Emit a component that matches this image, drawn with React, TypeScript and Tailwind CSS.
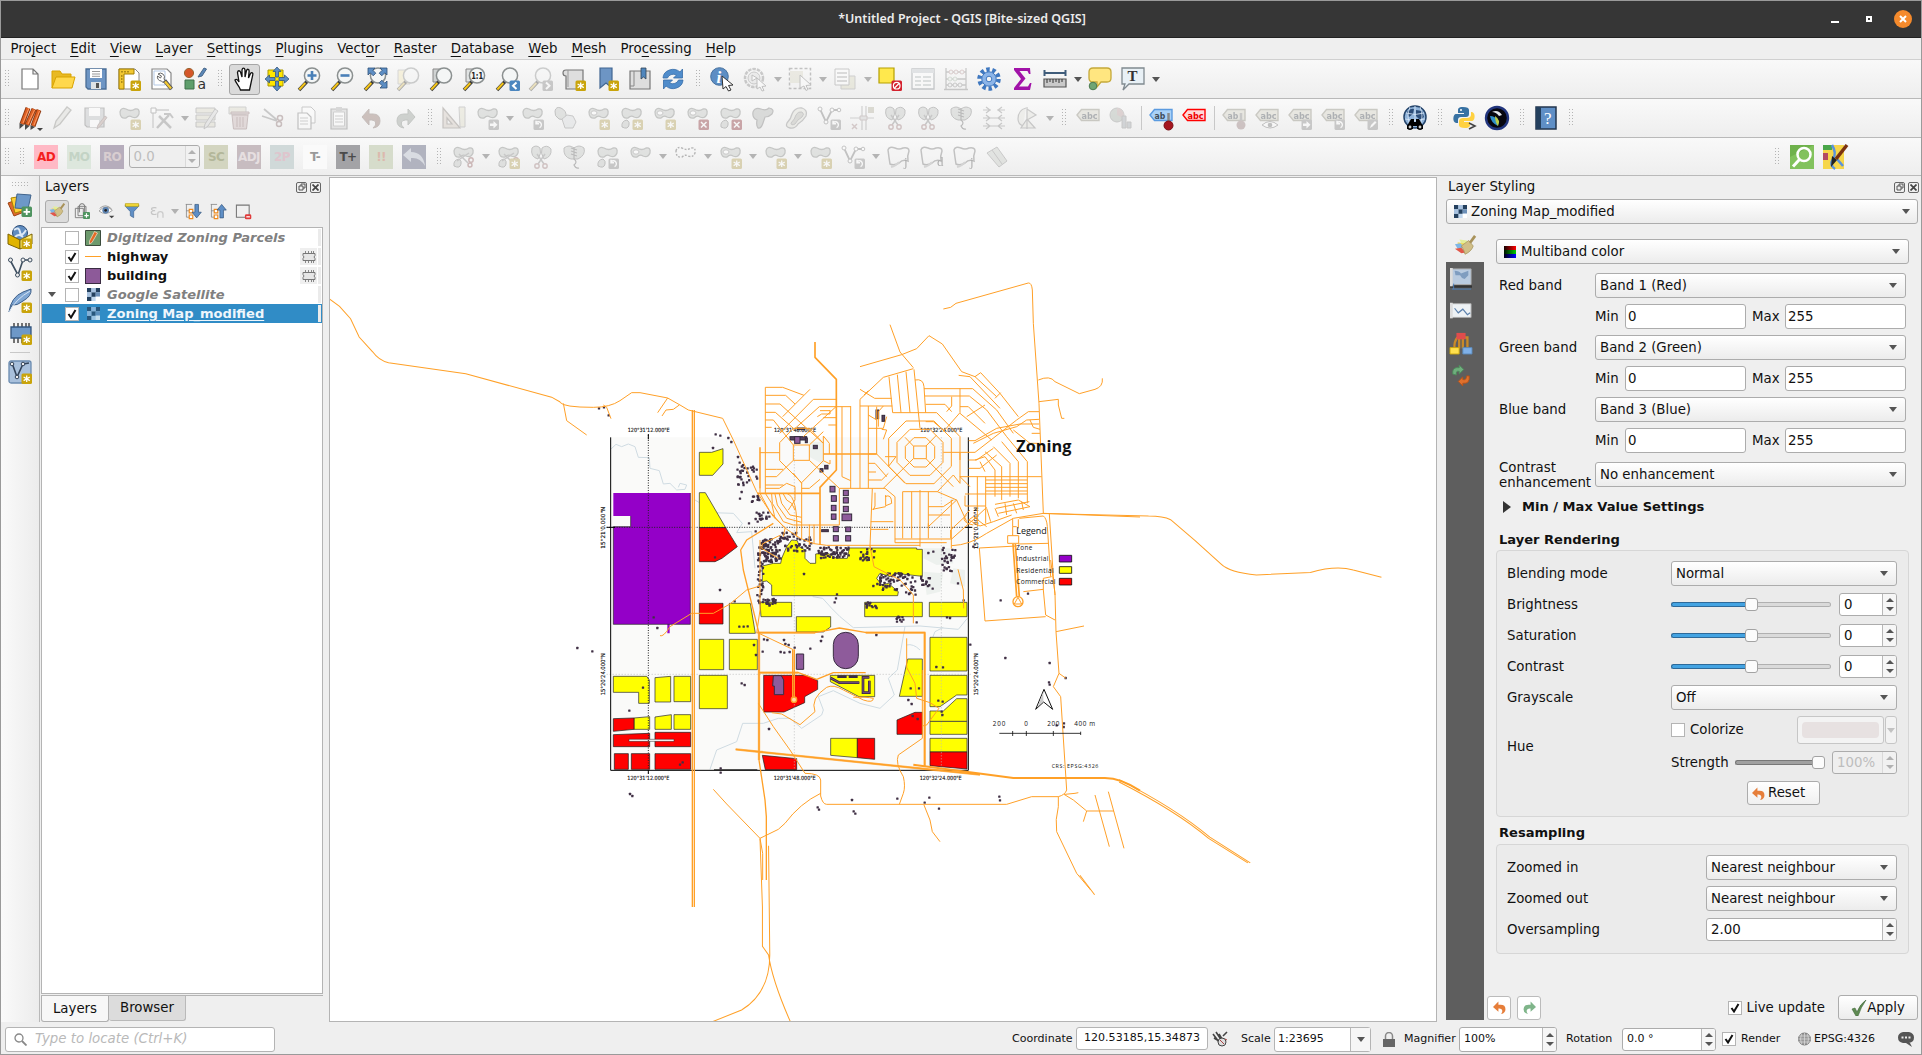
import React from "react";

/* ---------- icon drawing ---------- */

const BLOB = "M3 6 Q4 1 9 3 Q14 6 18 3 Q23 2 22 8 Q20 13 15 11 Q12 9 9 12 Q3 13 3 6Z";

function Badge({ k }: { k: string }) {
  const bg = k === "star" ? "#c9a40b" : k === "plus" ? "#4f9460" : k === "x" || k === "no" ? "#d3212d" : k === "prev" ? "#4b86bf" : "#8a8a8a";
  return (
    <g>
      <rect x="13.5" y="13.5" width="10.5" height="10.5" rx="1.5" fill={bg} />
      {k === "star" && <path d="M18.7 15.5v6.6M15.6 17l6.2 3.6M15.6 20.6l6.2-3.6" stroke="#fff" strokeWidth="1.3" />}
      {k === "plus" && <path d="M18.7 15.5v6.6M15.5 18.8h6.6" stroke="#fff" strokeWidth="1.8" />}
      {k === "x" && <path d="M16 16l5.5 5.5M21.500 16L16 21.500" stroke="#fff" strokeWidth="1.5" />}
      {k === "no" && <><circle cx="18.700" cy="18.700" r="3.300" fill="none" stroke="#fff" strokeWidth="1.200" /><path d="M16.500 21l4.500-4.500" stroke="#fff" strokeWidth="1.200" /></>}
      {k === "prev" && <path d="M20.500 15.500l-3.500 3.300 3.500 3.300" fill="none" stroke="#fff" strokeWidth="2" />}
      {k === "next" && <path d="M17 15.500l3.500 3.300-3.500 3.300" fill="none" stroke="#fff" strokeWidth="2" />}
      {k === "arrow" && <path d="M15 17.500h3.500v-2.500l4 3.800-4 3.800v-2.500H15z" fill="#fff" />}
      {k === "rot" && <path d="M16 17a3 3 0 1 1 3.500 4.600M16 14.800v3h3" fill="none" stroke="#fff" strokeWidth="1.400" />}
      {k === "pen" && <path d="M16 22l1-3 4-4 1.500 1.500-4 4z" fill="#fff" />}
    </g>
  );
}

function Mag({ x = 0, inner }: { x?: number; inner?: React.ReactNode }) {
  return (
    <g transform={`translate(${x} 0)`}>
      <path d="M1 23l8-8.500" stroke="#3d3d3d" strokeWidth="3.400" />
      <path d="M1.300 22.500l6-6.500" stroke="#f5c518" strokeWidth="2" />
      <circle cx="14" cy="8.500" r="7.600" fill="#f4f6f6" stroke="#8b9090" strokeWidth="1.500" />
      {inner}
    </g>
  );
}

const Tag = ({ fill, stroke, text }: { fill: string; stroke: string; text: string }) => (
  <g>
    <path d="M1 9l4.500-5.500H23v11H5.500z" fill={fill} stroke={stroke} strokeWidth="1.400" />
    <text x="5.500" y="12.500" fontSize="9" fontWeight="bold" fill={stroke === "#f00" ? "#e00" : "#3f4d5c"} textLength={text.length * 5.400} lengthAdjust="spacingAndGlyphs">{text}</text>
  </g>
);

function glyph(name: string): React.ReactNode {
  const [base, badge] = name.split("+");
  const b = badge ? <Badge k={badge} /> : null;
  const blob = <path d={BLOB} fill="#bfc6bf" stroke="#7d837d" strokeWidth="1.300" />;
  switch (base) {
    case "new":
      return <path d="M4 2h11l5 5v15H4zM15 2v5h5" fill="#fff" stroke="#777" strokeWidth="1.200" />;
    case "open":
      return <><path d="M1 21V4h8l2 3h9v3" fill="#e8b923" stroke="#d9a300" /><path d="M1 21l4-11h19l-3 11z" fill="#ffd84d" stroke="#d9a300" /></>;
    case "save":
      return <><path d="M2 2h20v20H4l-2-2z" fill="#6d95c4" stroke="#4a6d96" strokeWidth="1.300" /><path d="M6 2h12v9H6z" fill="#fff" /><path d="M8 4.500h8M8 7h8M8 9.300h8" stroke="#999" /><path d="M7 15h10v7H7z" fill="#dfe3e6" /><path d="M12 16h3v5h-3z" fill="#555" /></>;
    case "layout":
      return <><path d="M2 2h16l4 4v16H2z" fill="#fff" stroke="#888" /><path d="M2 2h15v5H7v15H2z" fill="#f2c832" stroke="#a37f00" /><path d="M5 4v1.500M8 4v1.500M11 4v1.500M4 9h1.500M4 12h1.500M4 15h1.500" stroke="#6b5200" />{b}</>;
    case "manager":
      return <><path d="M2 2h15l4 4v16H2z" fill="#fff" stroke="#888" strokeWidth="1.200" /><path d="M4 4h11v14H4z" fill="none" stroke="#b4c9e6" /><path d="M8 7a4 4 0 0 1 6 5l1.500 2-2 2-2-2a4 4 0 0 1-4-5l3 2 1-2z" fill="#fff" stroke="#666" /><path d="M14.500 13.500l7 8.500" stroke="#555" strokeWidth="4" /><path d="M15 14.500l6 7" stroke="#f4c931" strokeWidth="2.300" /></>;
    case "styles":
      return <><circle cx="6" cy="6" r="4.600" fill="#d4572a" stroke="#963" /><path d="M15 10l6-9 2.500 1L19 9z" fill="#5b88b8" stroke="#47678a" /><path d="M2 13h9v9H2z" fill="#5f9e6c" stroke="#3f704a" /><text x="14.500" y="22" fontSize="14" fill="#333">a</text></>;
    case "hand":
      return <path d="M8.500 23c-1-4-4.500-6.500-5.500-10 1.500-1.500 3 0 4 2L5.500 5.500C6 3 7.800 3.500 8.500 5l1.500 5V3c.5-2.500 2.500-2.500 3 0v7l1.500-6.500c.8-2 2.800-1.500 2.600.7L16.500 11l2-4.500c1.300-1.500 2.800-.7 2.300 1.200L19 16l-1.500 7z" fill="#fff" stroke="#111" strokeWidth="1.300" />;
    case "pan":
      return <><path d="M3 3h15v16H3z" fill="#ffe600" stroke="#a89600" /><path d="M12 0l4 4.500h-2.500V10h-3V4.500H8zM12 24l4-4.500h-2.500V14h-3v5.500H8zM0 12l4.500-4v2.500H10v3H4.500V16zM24 12l-4.500-4v2.500H14v3h5.500V16z" fill="#5d8ec4" stroke="#33557d" strokeWidth=".8" /></>;
    case "zin":
      return <Mag inner={<path d="M14 4v9M9.500 8.500h9" stroke="#4980b8" strokeWidth="2.600" />} />;
    case "zout":
      return <Mag inner={<path d="M9.500 8.500h9" stroke="#4980b8" strokeWidth="2.600" />} />;
    case "zfull":
      return <><Mag /><path d="M4 1h7L8.800 3.200l3 3-2.600 2.600-3-3L4 8zM23 1h-7l2.200 2.200-3 3 2.600 2.600 3-3L23 8zM23 21h-7l2.200-2.200-3-3 2.600-2.600 3 3L23 14z" fill="#5d8ec4" stroke="#2e5078" strokeWidth=".8" /></>;
    case "zsel":
      return <><path d="M1 3h12v14H1z" fill="#ffe98a" stroke="#aaa" /><Mag /></>;
    case "zlayer":
      return <><path d="M3 2h12v13H3z" fill="#d0d3d3" stroke="#888" /><Mag /></>;
    case "znative":
      return <><path d="M3 2h8v13H3z" fill="#e0e3e3" stroke="#888" /><Mag inner={<text x="8.200" y="12" fontSize="9.500" fontWeight="bold" textLength="12" lengthAdjust="spacingAndGlyphs" fill="#222">1:1</text>} /></>;
    case "zoom":
      return <><Mag />{b}</>;
    case "mapview":
      return <><path d="M4 3q-3 0-3 3t3 3v13h17V3z" fill="#dedede" stroke="#777" strokeWidth="1.200" /><path d="M6 3v17" stroke="#999" />{b}</>;
    case "bookmark":
      return <><path d="M5 1h12v20l-6-5-6 5z" fill="#6d95c4" stroke="#416692" strokeWidth="1.200" />{b}</>;
    case "bookmarks":
      return <><path d="M2 4h20v18H2z" fill="#dedede" stroke="#777" strokeWidth="1.200" /><path d="M6 4v15H2" fill="none" stroke="#888" /><path d="M13 1h5v11l-2.500-2L13 12z" fill="#4f86bd" stroke="#345" strokeWidth=".8" /></>;
    case "refresh":
      return <><path d="M2 11a10 9 0 0 1 17-6l2.500-3v9h-9l3-3a6 5 0 0 0-9 3z" fill="#4f8ccb" stroke="#356ca8" strokeWidth=".8" /><path d="M22 13a10 9 0 0 1-17 6l-2.500 3v-9h9l-3 3a6 5 0 0 0 9-3z" fill="#4f8ccb" stroke="#356ca8" strokeWidth=".8" /></>;
    case "identify":
      return <><circle cx="9.500" cy="9.500" r="8.800" fill="#5d8ec4" stroke="#45709f" /><text x="6.500" y="15.500" fontFamily="Liberation Serif" fontSize="17" fontStyle="italic" fontWeight="bold" fill="#fff">i</text><path d="M12 9l11 9-4.500.5L21 23l-2.500 1-2.500-4.500L13 22z" fill="#fff" stroke="#333" /></>;
    case "action":
      return <><circle cx="11" cy="11" r="9" fill="none" stroke="#8a8a8a" strokeWidth="2.500" strokeDasharray="3.500 1" /><circle cx="11" cy="11" r="6" fill="#ddd" stroke="#888" /><path d="M9 8l5 3-5 3zM14 11l9 8-4 .5 2 4-2 .5-2-4-3 2z" fill="#fff" stroke="#777" /></>;
    case "select":
      return <><path d="M1.500 1.500h21v20h-21z" fill="none" stroke="#777" strokeWidth="1.500" strokeDasharray="3 2" /><path d="M2 4h13v12H2z" fill="#dcd9b5" /><path d="M12 8l11 10-5 .5 2 4-2 1-2-4.500-4 2z" fill="#fff" stroke="#777" /></>;
    case "selform":
      return <><path d="M8 9h14v13H8z" fill="#dcd9a8" stroke="#999" /><path d="M2 2h14v16H2z" fill="#fff" stroke="#888" /><path d="M4 6h10M4 10h10M4 14h10" stroke="#999" strokeWidth="1.500" /></>;
    case "desel":
      return <><path d="M1 1h15v15H1z" fill="#ffe84d" stroke="#b5a000" strokeWidth="1.200" />{b}</>;
    case "table":
      return <><path d="M1 2h22v20H1z" fill="#fff" stroke="#7c8891" strokeWidth="1.300" /><path d="M1 2h22v4H1z" fill="#bdc9d2" /><path d="M4 10h6M12 10h8M4 14h6M12 14h8M4 18h6M12 18h8" stroke="#9aa" strokeWidth="1.300" /></>;
    case "abacus":
      return <><path d="M2 1v22M22 1v22M2 5h20M2 12h20M2 18h20M0 22.500h24" stroke="#888" strokeWidth="1.300" /><g fill="#eee" stroke="#c88"><circle cx="7" cy="5" r="2" /><circle cx="12" cy="5" r="2" /><circle cx="18" cy="5" r="2" /></g><g fill="#eee" stroke="#9b9"><circle cx="6" cy="12" r="2" /><circle cx="11" cy="12" r="2" /></g><g fill="#eee" stroke="#888"><circle cx="6" cy="18" r="2" /><circle cx="11" cy="18" r="2" /><circle cx="16" cy="18" r="2" /></g></>;
    case "gear":
      return <><circle cx="12" cy="12" r="9.500" fill="none" stroke="#3f78c0" strokeWidth="4.500" strokeDasharray="3.400 2.570" /><circle cx="12" cy="12" r="7.200" fill="#8bb4e8" stroke="#3f78c0" /><circle cx="12" cy="12" r="2.800" fill="#f5f5f5" stroke="#3f78c0" /></>;
    case "sum":
      return <path d="M4 1h16l.5 6H19l-1.500-3H9.500l6 7.500L9 19.500h9l2-3.500h1.500L20 23H4v-2l7-9-7-9z" fill="#a112a8" />;
    case "ruler":
      return <><path d="M1 6h22M1.500 3v6M22.500 3v6" stroke="#3f5c7a" strokeWidth="2" /><path d="M1 12h22v8H1z" fill="#c9c9c9" stroke="#555" strokeWidth="1.200" /><path d="M4 12v4M7 12v3M10 12v4M13 12v3M16 12v4M19 12v3" stroke="#333" /></>;
    case "tip":
      return <><path d="M5 1h14q4 0 4 4v6q0 4-4 4h-6l-4 5v-5H5q-4 0-4-4V5q0-4 4-4z" fill="#ffe680" stroke="#c5a93a" strokeWidth="1.300" /><circle cx="5" cy="19" r="3.800" fill="#6fa574" stroke="#4c7a50" /></>;
    case "annot":
      return <><path d="M1 1h22v16H8l-6 6 2-6H1z" fill="#e9f1f6" stroke="#808a90" strokeWidth="1.300" /><text x="6.500" y="14" fontFamily="Liberation Serif" fontSize="15" fontWeight="bold" fill="#333">T</text></>;
    case "pencils":
      return <><path d="M4 18L10 2M9 19L16 3M15 20L21 4" stroke="#8f3a12" strokeWidth="5" /><path d="M4 18L10 2M9 19L16 3M15 20L21 4" stroke="#dd5f22" strokeWidth="3.200" /><path d="M5 17l6-15M10 18l6.500-14M16 19l5.500-14" stroke="#ff9a63" strokeWidth="1" /><path d="M1.500 17l4.500 2-4.500 4zM7 18l4.500 2-4.500 4zM12.500 19l4.500 2-4.500 3z" fill="#4a4a4a" /><path d="M19 22h6l-3 3z" fill="#444" /></>;
    case "pencil":
      return <path d="M3 22l2-7L16 1l4 3L9 18z" fill="#d9d9d0" stroke="#8a8a80" strokeWidth="1.300" />;
    case "saveedit":
      return <><path d="M1 2h19v19H3l-2-2z" fill="#b9c0c6" stroke="#777" strokeWidth="1.200" /><path d="M5 2h11v8H5zM6 14h9v7H6z" fill="#fff" /><path d="M13 23l1-4 7-9 2 1.500-7 9z" fill="#c98" stroke="#977" /></>;
    case "vertex":
      return <><path d="M3 4h16M3 4v18" stroke="#999" strokeWidth="1.300" /><path d="M1 2h5v5H1z" fill="#fff" stroke="#777" /><path d="M7 22l12-13M9 10l12 12" stroke="#888" strokeWidth="2.500" /><path d="M14 8h6l3 4" stroke="#888" fill="none" strokeWidth="2" /></>;
    case "attr":
      return <><path d="M1 2h19v5H1zM1 9h19v5H1zM1 16h19v5H1z" fill="#dcd9b5" stroke="#888" /><path d="M9 23l1-5L20 3l3 2-10 15z" fill="#d5d5d5" stroke="#888" /></>;
    case "trash":
      return <><path d="M1 1h17v7H1z" fill="#dcd9b5" stroke="#999" /><path d="M4 9h16l-1.500 14h-13zM3 6h18v2H3z" fill="#d8b0b0" stroke="#a06b6b" /><path d="M9 11v10M12 11v10M15 11v10" stroke="#a06b6b" /></>;
    case "cut":
      return <><path d="M1 10l15 5M3 3l13 11" stroke="#888" strokeWidth="1.800" /><circle cx="19" cy="12" r="2.500" fill="none" stroke="#a06b6b" strokeWidth="1.500" /><circle cx="18" cy="18" r="2.500" fill="none" stroke="#a06b6b" strokeWidth="1.500" /></>;
    case "copy":
      return <><path d="M8 1h9l4 4v12H8z" fill="#fff" stroke="#888" /><path d="M4 7h9l4 4v12H4z" fill="#fff" stroke="#777" strokeWidth="1.200" /><path d="M6 12h8M6 15h8M6 18h8" stroke="#999" /></>;
    case "paste":
      return <><path d="M4 3h16v20H4z" fill="#ccc" stroke="#777" strokeWidth="1.200" /><path d="M6.500 6h11v14h-11z" fill="#fff" stroke="#999" /><path d="M9 1h6v4H9z" fill="#aaa" /><path d="M8 10h8M8 13h8M8 16h8" stroke="#999" /></>;
    case "undo":
      return <path d="M9 3v5h4q7 0 7 7 0 6-7 7 4-3 2.500-6-1-2-4-2H9v5L2 11z" fill="#a86e5c" stroke="#8d6a5c" />;
    case "redo":
      return <path d="M15 3v5h-4q-7 0-7 7 0 6 7 7-4-3-2.500-6 1-2 4-2H15v5l7-8z" fill="#93a093" stroke="#788578" />;
    case "ruler2":
      return <><path d="M1 2l17 20H1zM5 12v6h5z" fill="#dcc6b5" stroke="#8a7c70" strokeWidth="1.200" fillRule="evenodd" /><path d="M17 1h6v20h-5z" fill="#e3dfb5" stroke="#999" /></>;
    case "blob":
      return <>{blob}{b}</>;
    case "ring":
      return <>{blob}<ellipse cx="8" cy="7" rx="3" ry="2.200" fill="#fff" stroke="#888" />{b}</>;
    case "part":
      return <>{blob}<path d="M3 21q-1-6 5-7 3 2 2 5-1 5-7 2z" fill="#bfc6bf" stroke="#777" />{b}</>;
    case "hex":
      return <><path d="M2 5q1-5 6-3 6 3 5 9-3 4-7 2-5-3-4-8z" fill="#bfc6bf" stroke="#777" /><path d="M9 13l5-4 6 1 3 6-3 6H12z" fill="#d5dbe0" stroke="#888" /></>;
    case "reshape":
      return <path d="M2 6q2-5 8-3 5 2 8-1 6 1 3 6-3 3-7 3l-2 6q-2 6-5 5-2-2-1-8-5-2-4-8z" fill="#aeb5ae" stroke="#777" strokeWidth="1.200" />;
    case "offset":
      return <><path d="M3 17q4-4 5-9 3-7 10-6 6 2 4 8-3 5-8 8-3 5-8 4-5-1-3-5z" fill="#dfe0d0" stroke="#888" strokeWidth="1.300" /><path d="M7 17q4-4 5-8 2-4 6-3 3 2 0 5-5 3-7 7-4 2-4-1z" fill="#b5b5a8" stroke="#888" /></>;
    case "vsplit":
      return <><path d="M3 3l6 13L15 4h7" fill="none" stroke="#777" strokeWidth="1.800" /><g fill="#fff" stroke="#777"><circle cx="3" cy="3" r="2" /><circle cx="15" cy="4" r="2" /><circle cx="22" cy="4" r="1.800" /><circle cx="9" cy="16" r="2" /></g>{b}</>;
    case "node":
      return <><path d="M12 0v24M16 0v24M0 12h24" stroke="#999" strokeWidth="1.200" /><path d="M10 10h7v4h-7z" fill="#ccc" stroke="#a88" /><path d="M2 18l5 5M7 18l-5 5" stroke="#b88" strokeWidth="1.500" /><path d="M18 1h6v6h-6z" fill="#b5b08a" /></>;
    case "scissor":
      return <><path d="M3 3q4-4 8 0 2 5-2 11Q1 12 3 3zM13 3q5-4 9 1 1 8-7 10-4-6-2-11z" fill="#bfc6bf" stroke="#777" /><path d="M8 9l7 10M16 9L9 19" stroke="#888" strokeWidth="1.500" /><circle cx="8" cy="21" r="2.200" fill="none" stroke="#b77" strokeWidth="1.400" /><circle cx="16" cy="21" r="2.200" fill="none" stroke="#b77" strokeWidth="1.400" /></>;
    case "cutpart":
      return <>{blob}<path d="M3 21q-1-6 5-7 3 2 2 5-1 5-7 2z" fill="#bfc6bf" stroke="#777" /><path d="M6 16l12-8M8 9l9 9" stroke="#888" strokeWidth="1.500" /><circle cx="20" cy="15" r="2.200" fill="none" stroke="#b55" strokeWidth="1.400" /><circle cx="19" cy="20" r="2" fill="none" stroke="#b55" strokeWidth="1.400" />{b}</>;
    case "lace":
      return <><path d="M2 3q5-4 10 0 5-4 10 0 2 7-6 11h-7Q1 12 2 3z" fill="#bfc6bf" stroke="#777" /><path d="M9 3l6 2M9 6l6 2M9 9l6 2M12 2v12q4 3 0 6 2 4 5 3" fill="none" stroke="#666" strokeWidth="1.200" /></>;
    case "rows":
      return <path d="M1 4h8M15 4h8M1 12h22M1 20h22M4 1l4 3-4 3M20 1l-4 3 4 3M4 9l4 3-4 3M20 9l-4 3 4 3M4 17l4 3-4 3M20 17l-4 3 4 3" fill="none" stroke="#888" strokeWidth="1.200" />;
    case "rotate":
      return <path d="M11 2q-8 2-8 11 0 5 5 7M12 1v22M12 3l9 6-9 5zM12 13l8 9H6z" fill="#e3e3d8" stroke="#888" strokeWidth="1.200" />;
    case "tag":
      return <Tag fill="#d5d2b5" stroke="#8d8a6c" text="abc" />;
    case "tagdot":
      return <><Tag fill="#d5d2b5" stroke="#8d8a6c" text="ab" /><path d="M19 7v8" stroke="#888" strokeWidth="2.500" /><circle cx="19" cy="19" r="4.500" fill="#a77" /></>;
    case "tageye":
      return <><Tag fill="#d5d2b5" stroke="#8d8a6c" text="abc" /><path d="M7 19q8-7 16 0-8 6-16 0z" fill="#fff" stroke="#777" /><circle cx="15" cy="19" r="2.300" fill="#777" /></>;
    case "tagb":
      return <><Tag fill="#d5d2b5" stroke="#8d8a6c" text="abc" />{b}</>;
    case "tagblue":
      return <><Tag fill="#a9d1f7" stroke="#5b9be0" text="ab" /><path d="M19.500 7v9" stroke="#888" strokeWidth="2.500" /><circle cx="19.500" cy="19.500" r="4.500" fill="#a5161f" stroke="#7a0f16" /></>;
    case "tagred":
      return <Tag fill="#ffd9d9" stroke="#f00" text="abc" />;
    case "chart":
      return <><circle cx="8" cy="9" r="7" fill="#a3b4a3" stroke="#888" /><path d="M8 9V2a7 7 0 0 1 6 10z" fill="#c99" /><path d="M13 10h4v12h-4zM18 16h4v6h-4z" fill="#9aa8b5" stroke="#888" /></>;
    case "globebin":
      return <><circle cx="12" cy="11" r="11" fill="#8fb3da" stroke="#24446b" strokeWidth="1.500" /><path d="M4 6q3-4 7-3l-1 5-4 3zM13 4l6 1 2 6-4 3-4-4z" fill="#2c4d78" /><path d="M3 7q9 3 18 0M2 13q10 3 20 0M12 0v20M7 1q-4 9 0 18M17 1q4 9 0 18" fill="none" stroke="#dbe9f8" strokeWidth=".8" /><path d="M8 13h3v3h2v-3h3l4 7v3h-6v-3h-4v3H4v-3z" fill="#000" /><circle cx="7" cy="21" r="2.200" fill="#ccc" stroke="#000" strokeWidth="1.500" /><circle cx="17" cy="21" r="2.200" fill="#ccc" stroke="#000" strokeWidth="1.500" /></>;
    case "python":
      return <><path d="M11 1C6 1 6 3 6 5v2h6v1H4c-3 0-4 8 0 9h2v-3c0-2 1-3 3-3h5c2 0 3-1 3-3V4c0-2-2-3-6-3z" fill="#3872a3" /><path d="M13 22c5 0 5-2 5-4v-2h-6v-1h8c3 0 4-8 0-9h-1v3c0 2-2 3-4 3h-4c-2 0-4 1-4 3v4c0 2 2 3 6 3z" fill="#ffd140" /><circle cx="9" cy="4" r="1" fill="#fff" /><path d="M17 17l6 3-6 3" fill="none" stroke="#444" strokeWidth="1.600" /></>;
    case "parrot":
      return <><circle cx="12" cy="12" r="11" fill="#07070f" stroke="#22357d" strokeWidth="2.400" /><path d="M7 6q6-3 10 3l-3 1q-3-4-7-4z" fill="#e3e7ec" /><path d="M5 10q5 0 7 4l1 6q-7-3-8-10z" fill="#2f8fc9" /><path d="M10 10q6 4 3 10-3-4-3-10z" fill="#b9cf4a" /></>;
    case "help":
      return <><path d="M2 1h20v22H2z" fill="#5f8fc6" stroke="#23364d" strokeWidth="1.500" /><path d="M2 1h5v22H2z" fill="#24405e" /><text x="10" y="17.500" fontFamily="Liberation Serif" fontSize="17" fill="#fff">?</text></>;
    case "poly":
      return <><path d="M2 5q1-4 7-2 4 2 8 0 6-1 6 3-2 5-1 10-5-2-9 2-5 3-9 1-1-6-2-14z" fill="#f4f4f4" stroke="#777" strokeWidth="1.500" /><path d="M5 22q5-1 8-5" fill="none" stroke="#aaa" strokeWidth="2" /><text x="18" y="21" fontFamily="Liberation Serif" fontSize="13" fill="#444">{badge}</text></>;
    case "dash":
      return <path d={BLOB} fill="none" stroke="#555" strokeWidth="1.400" strokeDasharray="2 1.500" />;
    case "eraser":
      return <path d="M2 8l10-6 10 14-8 6zM7 5l10 14" fill="#c5ccc0" stroke="#888" />;
    case "osm":
      return <><path d="M0 0h24v24H0z" fill="#6fb24c" /><path d="M0 12L24 0v24H0z" fill="#82c25d" /><circle cx="14" cy="9.500" r="6.500" fill="none" stroke="#fff" strokeWidth="2.500" /><path d="M9.500 14.500L3 21.500" stroke="#fff" strokeWidth="3" /></>;
    case "mapart":
      return <><path d="M0 0h21v24H0z" fill="#f6d64b" /><path d="M0 0h9v5H0z" fill="#4aa64a" /><path d="M0 8h5v7H0z" fill="#b34a62" /><path d="M9 0q5 8 1 14-4 6 2 10M14 14l6 7" stroke="#5a92dd" strokeWidth="2.500" fill="none" /><path d="M24 0L13 14" stroke="#7b3210" strokeWidth="3.500" /><path d="M9 11l5 4-6 7z" fill="#222" /></>;
    case "lstack":
      return <><path d="M0 10l11-4 5 13-10 4z" fill="#e0692c" stroke="#9c4312" /><path d="M3 5l12-2 3 14-11 3z" fill="#ffd035" stroke="#a88300" /><path d="M9 1l14 1-3 14-13-1z" fill="#6d98c8" stroke="#41648c" />{b}</>;
    case "gpkg":
      return <><circle cx="12" cy="8" r="7.500" fill="#5f8cc0" stroke="#2f4f78" /><path d="M6 5q5-4 6 2t6-2M7 12q4-4 8 0" stroke="#dce8f5" fill="none" strokeWidth="2" /><path d="M0 9l12 6v9L0 19z" fill="#e0b400" stroke="#7d6300" /><path d="M24 9l-12 6v9l12-5z" fill="#fff07a" stroke="#7d6300" />{b}</>;
    case "vnew":
      return <><path d="M2 3l8 15L15 3h7" fill="none" stroke="#3e4f60" strokeWidth="1.600" /><g fill="#eee" stroke="#3e4f60"><circle cx="2.500" cy="3" r="2" /><circle cx="15" cy="3" r="2" /><circle cx="22" cy="3" r="2" /><circle cx="9.500" cy="18" r="2" /></g>{b}</>;
    case "feather":
      return <><path d="M1 23Q3 8 15 3l8-3q1 7-8 12-6 5-11 4z" fill="#7fa6d3" stroke="#3d5f89" /><path d="M1 23Q8 10 22 2" fill="none" stroke="#d6e4f3" />{b}</>;
    case "chip":
      return <><path d="M6 2v20M10 2v20M14 2v20M18 2v20M21 2v20" stroke="#3d3d3d" strokeWidth="1.400" /><path d="M3 6h20v11H3z" fill="#6d98c8" stroke="#33557d" strokeWidth="1.300" />{b}</>;
    case "vbox":
      return <><rect x="1" y="1" width="22" height="22" rx="2" fill="#a8c0dc" stroke="#6a8bb0" strokeWidth="1.300" /><path d="M4 3l5 14L15 4l6-1" fill="none" stroke="#33445a" strokeWidth="1.600" /><g fill="#eee" stroke="#33445a"><circle cx="4" cy="4" r="1.800" /><circle cx="9" cy="17" r="1.800" /><circle cx="15" cy="4" r="1.800" /></g>{b}</>;
    case "brush":
      return <><path d="M6 5l8 1 3 5-7 2z" fill="#e3ee9a" /><path d="M4 8l7 1 1 5-8-1z" fill="#f0dc5e" /><path d="M1 10l6-1 5 5-8 1z" fill="#7fb6e6" /><path d="M1 15l7-1 5 5-5 1z" fill="#e2574a" /><path d="M8 12l8-6 5 6q-2 6-9 9-1-5-4-9z" fill="#d1bf88" stroke="#a3935a" strokeWidth=".8" /><path d="M17.500 8.500L23 1" stroke="#a8925a" strokeWidth="3" /></>;
    case "addgrp":
      return <><path d="M2 8h12v14H2zM6 5h12v14H6z" fill="#eee" stroke="#777" strokeWidth="1.300" /><path d="M8 14V5a4 4 0 0 1 8 0v9" fill="none" stroke="#777" strokeWidth="1.500" />{b}</>;
    case "eye":
      return <><path d="M0 12Q10 1 20 11 10 20 0 12z" fill="#fff" stroke="#999" strokeWidth="1.300" /><circle cx="10" cy="11" r="5" fill="#5d83b0" /><circle cx="10" cy="11" r="2" fill="#222" /><path d="M1 8q9-8 18 1" fill="none" stroke="#777" /><path d="M15 19h8l-4 4z" fill="#444" /></>;
    case "filter":
      return <><path d="M2 3h20v2l-7.500 8v9l-5-3v-6L2 5z" fill="#5f8fc6" stroke="#3c638f" /><path d="M2 1h20v4H2z" fill="#f5dc3d" stroke="#b59b00" /></>;
    case "eps":
      return <><text x="1" y="18" fontSize="22" fill="#888">ε</text><path d="M13 22v-5a4 4 0 0 1 8 0v5" fill="none" stroke="#999" strokeWidth="2" /></>;
    case "expand":
    case "collapse":
      return <><path d="M1 2h9M2 2v18h6M2 11h6" fill="none" stroke="#777" /><path d="M6 9h5v5H6zM6 17h5v5H6z" fill="#fff" stroke="#f08a1c" strokeWidth="1.600" />{base === "expand" ? <path d="M14 2h5v11h4l-6.500 8L10 13h4z" fill="#5f8fc6" stroke="#33557d" /> : <path d="M14 21h5V10h4l-6.500-8L10 10h4z" fill="#5f8fc6" stroke="#33557d" />}</>;
    case "removel":
      return <><path d="M2 3h18v17H2z" fill="#f0f0f0" stroke="#777" strokeWidth="1.500" /><rect x="14" y="16" width="9" height="7" rx="2" fill="#e03c3c" /><path d="M16 19.500h5" stroke="#fff" strokeWidth="1.800" /></>;
    case "checker":
      return <><path d="M0 0h24v24H0z" fill="#c3d8ee" /><path d="M0 0h8v8H0zM16 0h8v8h-8zM8 8h8v8H8zM0 16h8v8H0z" fill="#24405e" /><path d="M8 0h8v8H8zM0 8h8v8H0z" fill="#a8c2e0" /><path d="M16 8h8v8h-8z" fill="#6d90b8" /><path d="M16 16h8v8h-8z" fill="#fff" /></>;
    case "transp":
      return <><path d="M2 1h21v17H2z" fill="#b9cbe0" stroke="#aaa" /><path d="M5 3q5 0 7 3l8-3v5l-4 4q-4-1-5-4L6 8z" fill="#7f9dc0" /><path d="M0 19h24v2.500H0z" fill="#333" /><path d="M2 23h21M4 17v6" stroke="#4a80c0" /><path d="M0 0h3v20H0z" fill="#ddd" /></>;
    case "hist":
      return <><path d="M1 4h22v15H1z" fill="#eef2f5" stroke="#aaa" /><path d="M0 3h3v17H0z" fill="#ddd" /><path d="M5 9l4 5 5-4 5 6 3-2" fill="none" stroke="#5b80ac" strokeWidth="1.300" /></>;
    case "sources":
      return <><path d="M8 6q-4 5-3 12M15 6h4v12M10 6v12M14 6v12" stroke="#c98a28" strokeWidth="2.500" fill="none" /><path d="M7 1h10v7H7z" fill="#e04c4c" /><path d="M0 17h10v7H0z" fill="#ffe04d" stroke="#c9a40b" /><path d="M14 17h10v7H14z" fill="#7fb0e8" stroke="#5b88b8" /></>;
    case "history":
      return <><path d="M3 11Q2 3 10 4V1l5 5-5 5V8q-4-1-3 4z" fill="#6faf7d" stroke="#4d8a5b" /><path d="M21 13q1 9-7 8v3l-5-5 5-5v3q4 1 4-4z" fill="#e0702c" stroke="#b3521a" /></>;
    default:
      return null;
  }
}

const Icon = ({ n, s = 24, dim }: { n: string; s?: number; dim?: boolean }) => (
  <svg width={s} height={s} viewBox="0 0 24 24" className={dim ? "shrink-0 overflow-visible opacity-40 saturate-50" : "shrink-0 overflow-visible"}>{glyph(n)}</svg>
);

/* ---------- toolbar pieces ---------- */

const Grip = ({ first }: { first?: boolean }) => (
  <div className={first ? "flex w-[12.500px] shrink-0 justify-center" : "flex w-4 shrink-0 justify-center"}>
    <svg width="4" height="18"><path d="M.5 0v18M3.500 0v18" stroke="#b4b4b4" strokeDasharray="1 2" /></svg>
  </div>
);

const Arrow = ({ dim }: { dim?: boolean }) => (
  <div className="flex w-3 shrink-0 justify-center">
    <svg width="8" height="5" className={dim ? "opacity-40" : ""}><path d="M0 0h8L4 5z" fill="#555" /></svg>
  </div>
);

function Bar({ items }: { items: string[] }) {
  return (
    <>
      {items.map((raw, i) => {
        if (raw === "|") return <Grip key={i} />;
        if (raw === "|0") return <Grip key={i} first />;
        if (raw === "/") return <div key={i} className="mx-[3px] h-6 w-px shrink-0 bg-[#c8c8c8]" />;
        if (raw === "v") return <Arrow key={i} />;
        if (raw === "-v") return <Arrow key={i} dim />;
        const dim = raw.startsWith("-");
        const n = dim ? raw.slice(1) : raw;
        if (n === "hand")
          return (
            <div key={i} className="mx-px flex h-[31px] w-[31px] shrink-0 items-center justify-center rounded-[3px] border border-[#a6a6a6] bg-[#dadada]">
              <Icon n={n} />
            </div>
          );
        return <div key={i} className="flex w-[33px] shrink-0 justify-center"><Icon n={n} dim={dim} /></div>;
      })}
    </>
  );
}

const row1 = ["|0", "new", "open", "save", "layout+star", "manager", "styles", "|", "hand", "pan", "zin", "zout", "zfull", "-zsel", "zlayer", "znative", "zoom+prev", "-zoom+next", "mapview+star", "bookmark+star", "bookmarks", "refresh", "|", "identify", "-action", "-v", "-select", "-v", "-selform", "-v", "desel+no", "-table", "-abacus", "gear", "sum", "ruler", "v", "tip", "annot", "v"];
const row2 = ["|0", "pencils", "-pencil", "-saveedit", "-blob+star", "-vertex", "-v", "-attr", "-trash", "-cut", "-copy", "-paste", "-undo", "-redo", "|", "-ruler2", "-blob+arrow", "-v", "-blob+rot", "-hex", "-ring+star", "-part+star", "-ring+star", "-ring+x", "-part+x", "-reshape", "-offset", "-vsplit+rot", "-node", "-scissor", "-scissor", "-lace", "-rows", "-rotate", "-v", "|", "-tag", "-chart", "/", "tagblue", "tagred", "/", "-tagdot", "-tageye", "-tagb+arrow", "-tagb+rot", "-tagb+pen", "|", "globebin", "|", "python", "parrot", "|", "help", "|"];
const row3 = ["|", "-cutpart", "-v", "-cutpart+star", "-scissor", "-lace", "-part+rot", "-ring", "-v", "-dash", "-v", "-ring+star", "-v", "-blob+star", "-v", "-blob+star", "-vsplit+rot", "-v", "-poly+j", "-poly+d", "-poly+j", "-eraser"];

const Chip = ({ t, c }: { t: string; c: string }) => (
  <div className="flex w-[33px] shrink-0 justify-center"><div className={`flex h-6 w-6 items-center justify-center text-[12px] font-bold tracking-tighter ${c}`}>{t}</div></div>
);

/* ---------- form controls ---------- */

const Down = ({ dim }: { dim?: boolean }) => (
  <svg width="8" height="5" className={dim ? "shrink-0 opacity-30" : "shrink-0"}><path d="M0 0h8L4 5z" fill="#555" /></svg>
);

const Combo = ({ text, cls, icon, pr = "pr-2" }: { text: string; cls: string; icon?: React.ReactNode; pr?: string }) => (
  <div className={`flex h-[25px] shrink-0 items-center rounded-[3px] border border-[#acacac] bg-gradient-to-b from-white to-[#ececec] ${icon ? "pl-[7px]" : "pl-1"} ${pr} ${cls}`}>
    {icon}<span className="flex-1">{text}</span><Down />
  </div>
);

const Field = ({ text, cls }: { text: string; cls: string }) => (
  <div className={`flex h-[25px] shrink-0 items-center rounded-[3px] border border-[#acacac] bg-white pl-0.5 ${cls}`}>{text}</div>
);

const Spin = ({ text, cls, dim }: { text: string; cls: string; dim?: boolean }) => (
  <div className={`flex shrink-0 items-stretch overflow-hidden rounded-[3px] border border-[#acacac] ${dim ? "bg-[#efefef] text-[#bdbdbd]" : "bg-white"} ${cls}`}>
    <span className="flex flex-1 items-center pl-1">{text}</span>
    <span className={`flex w-3.5 flex-col items-center justify-center gap-[5px] border-l border-[#b8b8b8] bg-[#f6f6f6] ${dim ? "opacity-40" : ""}`}>
      <svg width="8" height="4"><path d="M0 4h8L4 0z" fill="#555" /></svg>
      <svg width="8" height="4"><path d="M0 0h8L4 4z" fill="#555" /></svg>
    </span>
  </div>
);

const Check = ({ on }: { on?: boolean }) => (
  <div className="flex h-3.5 w-3.5 shrink-0 items-center justify-center border border-[#b4b4b4] bg-white">
    {on && <svg width="10" height="10" viewBox="0 0 10 10"><path d="M1.500 5l2.500 3.500L8.500 1" fill="none" stroke="#111" strokeWidth="2" /></svg>}
  </div>
);

const WinBtns = () => (
  <div className="flex gap-[3px]">
    <div className="flex h-[11px] w-[11px] items-center justify-center rounded-[2px] border border-[#666]">
      <svg width="8" height="8" viewBox="0 0 8 8" fill="none" stroke="#555"><path d="M1 3h4v4H1zM3 3V1h4v4H5" /></svg>
    </div>
    <div className="flex h-[11px] w-[11px] items-center justify-center rounded-[2px] border border-[#666]">
      <svg width="7" height="7" viewBox="0 0 7 7"><path d="M.5.5l6 6M6.500.5l-6 6" stroke="#444" strokeWidth="1.700" /></svg>
    </div>
  </div>
);

const Slider = () => (
  <div className="flex h-[23px] w-40 items-center">
    <div className="h-[5px] w-[74px] rounded-l-sm border border-r-0 border-[#2d6a9a] bg-[#43a3e2]" />
    <div className="h-[13px] w-[13px] rounded-[3px] border border-[#a3a3a3] bg-[#fcfcfc]" />
    <div className="h-[5px] w-[73px] rounded-r-sm border border-l-0 border-[#b0b0b0] bg-[#dadada]" />
  </div>
);

const MinMax = () => (
  <div className="mt-1.5 flex h-[25px] items-center pl-[99px]">
    <span className="w-[30px]">Min</span><Field text="0" cls="w-[121px]" />
    <span className="ml-1.5 w-[33px]">Max</span><Field text="255" cls="w-[121px]" />
  </div>
);

const Band = ({ label, value, mt }: { label: string; value: string; mt: string }) => (
  <div className={`${mt} flex h-[25px] items-center`}>
    <span className="ml-[3px] w-24">{label}</span><Combo text={value} cls="w-[311px]" />
  </div>
);

/* ---------- map canvas ---------- */

const oct = (cx: number, cy: number, r: number, k: number) =>
  `M${cx - k} ${cy - r}H${cx + k}L${cx + r} ${cy - k}V${cy + k}L${cx + k} ${cy + r}H${cx - k}L${cx - r} ${cy + k}V${cy - k}Z`;

function scatter(seed: number, n: number, x: number, y: number, w: number, h: number): number[][] {
  const out: number[][] = [];
  let s = seed * 7919;
  const next = () => { s = (s * 16807) % 2147483647; return s / 2147483647; };
  for (let i = 0; i < n; i++) out.push([x + next() * w, y + next() * h]);
  return out;
}

const dots: number[][] = [
  [117, 175], [132, 172], [146, 196], [467, 253], [481, 257], [505, 264], [514, 276], [459, 294], [534, 321], [539, 338], [545, 426], [540, 446],
  [590, 488], [598, 492], [610, 488], [620, 506], [628, 500], [587, 507], [567, 520], [593, 515], [587, 544], [480, 720], [524, 754], [465, 622],
  [281, 802], [292, 834], [52, 894], [97, 904], [249, 1013], [208, 1082], [545, 1000], [554, 1005], [368, 1237], [360, 1244], [482, 1255], [482, 1268],
  [210, 1332], [217, 1338], [627, 1137], [732, 672], [831, 733], [828, 745], [824, 757], [949, 855], [787, 860], [783, 873], [751, 896], [704, 893],
  [672, 870], [676, 882], [686, 885], [662, 906], [673, 908], [689, 906], [538, 830], [551, 830], [563, 829], [582, 885], [588, 915], [612, 868], [622, 870],
  [608, 905], [1129, 951], [1149, 952], [1231, 884], [1052, 1015], [1077, 1015], [1045, 1050], [1055, 1062], [1135, 1052], [1148, 1055], [1145, 1085], [1147, 1095],
  [1058, 1098], [1073, 1107], [1070, 817], [1161, 802], [1170, 804], [1105, 609], [1120, 605], [1240, 590], [1194, 700], [1211, 751], [1118, 716], [940, 708], [952, 702],
  [1012, 1346], [1108, 1343], [876, 1350], [1094, 1358], [1137, 1376], [773, 1372], [777, 1379], [881, 1384], [886, 1391], [1318, 1340], [1320, 1351],
  [1322, 751], [1404, 731], [1336, 924], [1469, 939], [1517, 984], [1467, 997], [1469, 1004], [1512, 1120], [1490, 1126], [1511, 1131],
  ...scatter(11, 30, 532, 345, 60, 62), ...scatter(5, 9, 574, 434, 26, 24), ...scatter(31, 100, 594, 568, 68, 70), ...scatter(8, 26, 592, 640, 18, 120),
  ...scatter(77, 36, 670, 562, 85, 45), ...scatter(6, 60, 775, 590, 92, 34), ...scatter(15, 20, 900, 595, 45, 38), ...scatter(4, 50, 955, 668, 75, 52),
  ...scatter(23, 20, 1030, 672, 40, 66), ...scatter(17, 14, 1082, 680, 30, 30), ...scatter(9, 28, 1140, 590, 48, 74), ...scatter(13, 22, 606, 747, 44, 20),
  ...scatter(41, 14, 918, 756, 32, 22), ...scatter(47, 9, 1010, 798, 22, 24), ...scatter(53, 12, 655, 545, 55, 22), ...scatter(61, 10, 596, 486, 30, 28),
];

const houses: number[][] = [[810, 409, 15, 17], [850, 421, 15, 16], [814, 437, 15, 17], [850, 443, 15, 16], [814, 466, 14, 16], [850, 469, 15, 16], [814, 492, 14, 16], [846, 492, 29, 20], [820, 530, 15, 15], [857, 531, 15, 14], [820, 557, 15, 16], [857, 557, 15, 16], [785, 539, 20, 6], [780, 356, 9, 10], [794, 346, 10, 11], [760, 286, 12, 10], [690, 260, 50, 10], [704, 260, 16, 20], [736, 264, 6, 14], [948, 180, 8, 26], [966, 196, 8, 18], [712, 234, 22, 5]];

const yellow = [
  "M418 307H455L489 296V342L458 376H418Z", "M418 428H436L497 533H418Z", "M508 760H571L586 850H508Z", "M600 757H695V800H603Z", "M709 800H812V831L790 846H709Z",
  "M914 757H1087V800H914Z", "M1108 757H1221V800H1108Z", "M1110 862H1221V963H1110Z", "M1110 976H1221V1035H1190L1140 1070L1110 1070Z", "M1150 1083L1190 1046H1221V1153H1110V1083Z", "M1110 1165H1221V1206H1110Z",
  "M418 868H491V959H418Z", "M508 868H592V959H508Z", "M418 976H502V1076H418Z", "M1043 927H1087V1039H1018Z", "M811 976H944V1040H897L811 995Z", "M812 1165H892V1223L812 1216Z",
  "M160 979H260L268 990V1060H236V1027H160Z", "M285 983L332 979V1056H285Z", "M342 979H392V1055H342Z", "M285 1101L334 1094V1138H285Z", "M342 1094H392V1138H342Z", "M222 1104L269 1100V1138H222Z",
  "M607 695V648L640 640H662L665 625L680 590L695 570L712 572L718 590L735 600V625L750 640H767V612L800 608L830 625H862L868 594H1070V598H1087V679L1005 670L990 680L960 670L950 685L965 705L985 700L1015 725L1013 737H635V705L620 693Z",
];
const red = ["M418 533H497L532 590L486 625L465 635H418Z", "M418 760H489V822H418Z", "M611 976H738L773 992V1018L734 1040V1058L672 1086H611Z", "M1011 1110L1065 1087H1087V1153H1011Z", "M892 1165H944V1228L892 1223Z", "M1110 1206H1221V1257L1110 1247Z", "M160 1106L222 1104V1138L160 1144Z", "M160 1154L269 1150V1190H160Z", "M285 1147H392V1190H285Z", "M163 1211H205V1258H163Z", "M214 1211H269V1258H214Z", "M285 1211H392V1258H285Z", "M607 1216L710 1226V1259H616Z"];

const streams = "M152 298L168 283 185 290 205 282 225 290 235 322 268 323 270 355 298 362 310 402 330 400 350 420 375 418 380 405 360 400 355 412M405 450L418 458 455 488 520 490 547 520 530 548 575 545 585 655M758 740L788 745 815 775 840 800 880 833 1080 828 1195 838 1222 805M1035 830L1012 960 985 985 1003 1035 960 1075 900 1060 820 1022 775 1040 790 1080 785 1095 725 1135 690 1105 655 1105 610 1120 548 1120 530 1175 470 1200 450 1258M1115 870L1125 845 1150 832M1172 450H1190M1040 885Q1060 880 1080 900";

const roadsA = "M0 157Q10 172 100 172Q150 172 180 152L215 128H240L323 144 360 165 385 180 488 205 520 270 590 425 640 500Q720 586 800 586H1080M10 160L20 212 80 255M130 165L140 172 153 206M323 144L293 188M358 165L340 178 318 180 306 198M600 292V415M600 570V780L590 850M662 555L607 582 605 595 655 625M300 857Q310 862 330 830L395 790 460 790 510 762 560 720 600 708M930 587L942 650 1020 690 1060 735V820M597 850L698 898M1040 865V952L1065 1000 1070 1045 1110 1058 1137 1075 1100 1125 1087 1128M635 1088L665 1092 720 1124 765 1085Q750 1045 800 1012Q820 1002 850 1020L910 1050Q940 1060 940 1045Q920 1040 880 1042M1087 960V1165L1015 1215Q1005 1240 1030 1280M595 1060L640 1130 690 1200 735 1270Q780 1270 782 1290V1338Q788 1363 800 1363M782 1330Q720 1360 675 1420L655 1438 600 1465 500 1362 460 1318M600 1465L608 1510V1590M1194 658L1210 720 1211 775M1174 450V596";
const roadsAT = "M397 180V1671M403 180V1671M640 520L560 570 542 600 550 660 597 850V1230L615 1350 619 1400V1590M592 848H765L838 834 920 848H1094V1250M698 898V1045M703 898V1045M597 968H715L770 988 820 968H917M527 1198L1260 1274";

const roadsB = [
  "M76 670V352H128L192 376 210 358M76 376H137L165 402M76 402H120L250 520V498L268 520V552M76 427H106L160 475M76 450H100L160 525M76 472H95M288 388H220L119 490M332 410H238L160 480M192 376L128 440M288 410L190 500M208 525L250 485M270 420V432H245L232 440M240 422H270M250 443H288M265 465H288",
  "M160 525H208V571H160ZM160 475H208L250 520V572L185 638 119 572V518ZM60 532V668M60 548H119M76 598H110L130 598M76 620H110L130 600M76 645H130M76 655H118L140 640 165 650V690L145 720M160 571L130 600M208 571L298 655M185 638V805M250 572L270 582V570M185 655H208L240 628M160 610L185 640",
  "M95 672L97 700 130 755 160 765H298V655M105 672L112 705 140 745 185 757M118 672L125 700 150 735 185 742M130 672L140 690 155 700 165 720M140 670Q175 680 170 800M222 764V820M208 764V825M60 670L90 725 135 775 130 800M76 670L95 700 105 745",
  "M332 408V655M306 410V620L332 632M298 655H435L465 680V818M360 655V388L430 322 520 296M360 358L404 385H455M360 408H457M372 375L385 362M385 408V655M410 410V552L495 640M385 435L410 450M385 475H430L440 440M385 580H405L440 620M385 606H408M385 630H425L445 610M385 552H410M397 655L390 830M397 718L437 710M405 668V708L400 720M435 680Q455 670 455 700L435 708M437 675V705M392 755H460M392 778H445M430 408L415 425V470M430 508L440 480 425 478",
  "M360 290L485 254 530 236 567 197 607 222 665 305 705 320 770 380M450 164L480 246 520 293M447 320L458 428H590L660 500V640M472 314L483 428M498 305L510 428M522 298L540 475M525 330Q550 325 552 350L557 428M552 356H698L770 420 820 490M555 378H688L740 420 800 500M557 403H615L635 425M557 455H580L610 480M660 355V428L610 485M635 380V408L620 425M656 316L690 320 780 415M660 410H685L735 460M660 430L720 480 755 510M680 440L735 405M705 320L722 308 780 370 835 440M765 385L782 368M610 117L632 112 648 100 865 39Q875 38 877 60L880 160 897 400 910 730",
  oct(540, 547, 19, 19), oct(540, 547, 44, 18), oct(540, 547, 69, 30), oct(540, 547, 94, 42),
  "M540 660V830M520 528L495 502M558 528L590 495M520 566L430 655M558 566L640 650M488 665V805M515 665V805M488 665H592L650 690 680 755M592 665L640 615 660 640M565 665V770L650 690M565 710H610L640 690M565 735H630M565 760V805M465 807H635L710 740 740 712M465 818H620M632 805V780L680 735M660 620L690 650M435 560H468L445 590M610 547H705L830 450 865 425H897M686 570H710L760 535M686 595H720L770 555M686 512H705L770 475 840 462H897M660 547V570",
  "M700 520L760 490 830 470 860 450 897 448M705 570L735 560 765 600V680M735 545L785 590V690M760 530L810 580V680M785 515L835 575V685M800 500L862 575V700M820 480L870 520H900M720 575L735 605M870 450L880 472 900 478M875 490H900M660 620H905M737 630H862M737 641H862M737 652H862M737 663H862M675 672H862M675 677V708H737V620M712 620V770M737 708V760M700 765Q650 755 690 720M740 715L752 755M765 715L775 740M765 703L835 690 870 710 775 730M768 715L868 695M795 700L800 735M820 700L830 730M845 695L850 720M635 827Q690 825 740 790L820 745 910 730 1200 741M740 770L700 740 686 750M686 750L720 768 760 755 815 735",
  "M895 330Q930 315 945 335L1018 371 1065 358Q1090 350 1087 325M897 395L955 388V405L965 445H973M818 745V770H830M838 745L910 738Q920 745 922 770L932 920M928 732L940 920 945 975M834 822L925 820M718 834L830 828M718 834L735 1053 917 1040M803 797H836V820H803ZM910 925V960L917 1035 945 1050M850 965L910 958M910 925L935 920M818 770V797M835 748V775",
];
const roadsBT = "M225 216V262L289 328V600L240 652V825M250 552H410M52 670H240M819 822L830 980M826 822L838 980";

const roadsC = "M932 0L945 100 948 215 957 340 940 380 962 410 980 690Q975 705 955 710H875L800 733H260M948 215L1032 198M957 340L978 355M975 703L1005 700 1015 698M955 710V740Q945 780 950 815L1010 940 1052 990M972 703L1000 720 1040 753H1122M1040 753L1030 785M1065 705L1108 860M1105 695L1152 865M552 735L570 780 577 815 600 845M490 650Q497 680 490 700L478 733";
const roadsCT = "M520 614L820 654H1090Q1140 652 1200 692";

const GeoLabel = ({ x, y, t }: { x: number; y: number; t: string }) => (
  <text x={x} y={y} fontSize="17" fill="#111" stroke="#111" strokeWidth=".4" textAnchor="middle" textLength="126" lengthAdjust="spacingAndGlyphs">{t}</text>
);

function MapCanvas() {
  return (
    <svg width="1106" height="843" viewBox="330 178 1106 843" className="block">
      <rect x="330" y="178" width="1106" height="843" fill="#fff" />
      <g transform="translate(560 350) scale(.33333)">
        <path d="M152 262H1225V1261H152Z" fill="#fafaf9" />
        <path d="M748 275H792V345L748 320ZM1090 595H1170L1180 640 1130 645 1090 625ZM1090 665L1150 670 1140 725 1100 735ZM1180 655L1215 660V710L1170 700Z" fill="#edf1ee" />
        <path d={streams} fill="none" stroke="#cfdbe2" strokeWidth="3" />
        <path d="M160 429H391V823H329V850H322V823H160V530H212V498H160Z" fill="#9400c8" />
        <path d="M391 429V823H160V530H212V498" fill="none" stroke="#222" strokeWidth="2" />
        {yellow.map((d) => <path key={d} d={d} fill="#ff0" stroke="#333" strokeWidth="2.200" />)}
        {red.map((d) => <path key={d} d={d} fill="#f00" stroke="#222" strokeWidth="2.200" />)}
        <path d="M462 1259H592M1110 1114H1221" stroke="#444" strokeWidth="3" />
        <path d="M207 1168H342V1174H207Z" fill="#fff" stroke="#222" strokeWidth="1.500" />
        <path d="M265 255V1270M140 532H1235" stroke="#222" strokeWidth="3" strokeDasharray="3 4.500" fill="none" />
        <path d="M703 262V1270M1144 262V1270M140 973H1235" stroke="#bbb" strokeWidth="2.500" strokeDasharray="3 6" fill="none" />
        <path d="M152 262V1261H1225V262" fill="none" stroke="#000" strokeWidth="3" />
        <path d="M265 252V268M140 532H165M1215 532H1237M265 1261V1272" stroke="#000" strokeWidth="3" />
        {[[266, 245, "120°31'12.000\"E"], [705, 245, "120°31'48.000\"E"], [1144, 245, "120°32'24.000\"E"], [265, 1290, "120°31'12.000\"E"], [704, 1290, "120°31'48.000\"E"], [1142, 1290, "120°32'24.000\"E"]].map(([x, y, t], i) => (
          <GeoLabel key={i} x={x as number} y={y as number} t={t as string} />
        ))}
        {[[135, 533, "15°21'0.000\"N"], [135, 973, "15°20'24.000\"N"], [1253, 535, "15°21'0.000\"N"], [1253, 973, "15°20'24.000\"N"]].map(([x, y, t], i) => (
          <g key={i} transform={`translate(${x} ${y}) rotate(-90)`}><GeoLabel x={0} y={0} t={t as string} /></g>
        ))}
        <rect x="820" y="847" width="75" height="109" rx="37" fill="#8e5b9b" stroke="#3a2c42" strokeWidth="3" />
        <path d="M709 912H731V958H709ZM640 977H664L671 990V1034H643L643 1008H638Z" fill="#8e5b9b" stroke="#3a2c42" strokeWidth="3" />
        <path d="M812 984L838 998H898M832 980H860M866 980H893M928 982H909V1028H928V992" fill="none" stroke="#3a2c42" strokeWidth="8" />
        <path d="M812 984L838 998H898M928 982H909V1028H928V992" fill="none" stroke="#7c4f88" strokeWidth="3" />
        {houses.map(([x, y, w, h], i) => <rect key={i} x={x} y={y} width={w} height={h} fill={w > 13 && h > 12 && w < 40 ? "#8e5b9b" : "#53405c"} stroke="#33283a" strokeWidth="3" />)}
        {dots.map(([x, y], i) => <rect key={i} x={x - 3.500} y={y - 3.500} width="7" height="7" rx="1.500" fill="#403045" />)}
        <g fill="none" stroke="#ffa027" strokeLinejoin="round">
          <path d={roadsA} strokeWidth="3" />
          <path d={roadsAT} strokeWidth="4" />
          <path d="M597 850V1230M592 848H765M917 848H1094V1250M597 968H715M527 1198L1260 1274" strokeWidth="7" strokeOpacity=".75" />
          <circle cx="702" cy="1049" r="8" strokeWidth="4" fill="#ffd9a3" />
        </g>
      </g>
      <g transform="translate(740 270) scale(.33333)" fill="none" stroke="#ffa027" strokeLinejoin="round">
        {roadsB.map((d, i) => <path key={i} d={d} strokeWidth="3" />)}
        <path d={roadsBT} strokeWidth="5" />
        <circle cx="834" cy="995" r="15" strokeWidth="4" /><path d="M834 982L823 1002H845Z" strokeWidth="3" />
      </g>
      <g transform="translate(740 560) scale(.33333)" fill="none" stroke="#ffa027" strokeLinejoin="round">
        <path d={roadsC} strokeWidth="3" />
        <path d={roadsCT} strokeWidth="6" />
      </g>
      <g transform="scale(1.22577)" fill="none" stroke="#ffa027" strokeWidth=".82">
        <path d="M269 244L277 250 286 260 293 275 304 287Q309 294 317 296L380 305 450 324 457 328M851 419L937 421Q949 421 955 424L975 441 996 460Q1003 467 1025 469L1069 467Q1090 461 1104 465L1127 471" />
        <path d="M913 636Q960 660 987 683L1020 704M913 638Q960 662 986 684L1018 704M620 684L622 740V772L627 779Q630 800 645 834M627 690L628 779Q628 810 605 824L580 834M881 714L893 730" />
      </g>
      <g transform="translate(740 270) scale(.33333)" fill="#111">
        <text x="829" y="546" fontSize="47" fontWeight="bold" fontFamily="Open Sans" textLength="165" lengthAdjust="spacingAndGlyphs">Zoning</text>
        <text x="829" y="792" fontSize="27" fontFamily="Open Sans" textLength="91">Legend</text>
        <text x="829" y="841" fontSize="19" fontFamily="Open Sans" textLength="48">Zone</text>
        <text x="829" y="873" fontSize="20" fontFamily="Open Sans" textLength="96">Industrial</text>
        <text x="829" y="908" fontSize="20" fontFamily="Open Sans" textLength="112">Residential</text>
        <text x="829" y="943" fontSize="20" fontFamily="Open Sans" textLength="117">Commercial</text>
        <path d="M958 856h37v20h-37z" fill="#9400c8" stroke="#111" strokeWidth="2.500" />
        <path d="M958 890h37v20h-37z" fill="#ff0" stroke="#111" strokeWidth="2.500" />
        <path d="M958 925h37v20h-37z" fill="#f00" stroke="#111" strokeWidth="2.500" />
      </g>
      <g transform="translate(740 560) scale(.33333)" fill="#111">
        <path d="M912 388L887 448 911 426 938 448Z" fill="#fff" stroke="#111" strokeWidth="3" />
        <path d="M910 396L893 440 910 424Z" fill="#ccc" />
        <path d="M778 520H1022M818 513V528M859 513V528M940 513V528M1022 515V525" stroke="#111" strokeWidth="2.500" />
        <g fontSize="19" fontFamily="Open Sans">
          <text x="758" y="497" textLength="38">200</text><text x="853" y="497">0</text><text x="922" y="497" textLength="36">200</text><text x="1003" y="497" textLength="62">400 m</text>
          <text x="935" y="624" fontSize="16" textLength="140">CRS: EPSG:4326</text>
        </g>
      </g>
    </svg>
  );
}

/* ---------- layer tree ---------- */

const Row = ({ on, icon, text, cls, chip, sel, open }: { on?: boolean; icon: React.ReactNode; text: string; cls: string; chip?: boolean; sel?: boolean; open?: boolean }) => (
  <div className={`flex h-[19px] items-center ${sel ? "bg-[#308cc6]" : ""}`}>
    <div className="flex w-[23px] justify-center pr-1">{open && <Down />}</div>
    <Check on={on} />
    <div className="ml-1.5 flex w-4 justify-center">{icon}</div>
    <span className={`ml-1 flex-1 pl-0.5 text-[13.050px] font-bold leading-[17px] ${cls}`}>{text}</span>
    {chip && (
      <div className="flex h-[17px] w-[17px] items-center justify-center bg-[#efefef]">
        <svg width="14" height="12" viewBox="0 0 14 12"><path d="M3.500 0v12M6.500 0v12M9.500 0v12M11.500 0v12" stroke="#888" /><path d="M1 2.500h12v2l-1 1.500 1 1.500v2H1v-2L2 6 1 4.500z" fill="#e6e6e6" stroke="#777" /></svg>
      </div>
    )}
    <div className="ml-px mr-px h-[17px] w-[3px] bg-[#ebebeb]" />
  </div>
);

const menus: [string, number][] = [["Project", 3], ["Edit", 0], ["View", 0], ["Layer", 0], ["Settings", 0], ["Plugins", 0], ["Vector", 4], ["Raster", 0], ["Database", 0], ["Web", 0], ["Mesh", 0], ["Processing", 3], ["Help", 0]];

const tbCls = "flex items-center border-b border-[#b9b9b9] bg-gradient-to-b from-[#f9f9f9] to-[#eeeeee]";

export default function App() {
  return (
    <div className="flex h-[1055px] w-[1922px] flex-col overflow-hidden border border-[#9a9a9a] bg-[#efefef] font-['DejaVu_Sans',sans-serif] text-[13.330px] leading-4 text-[#111]">
      <div className="flex h-[37px] shrink-0 items-center border-b border-[#222] bg-[#363636]">
        <div className="w-[92px]" />
        <div className="flex-1 text-center font-['Noto_Sans',sans-serif] text-[12.500px] font-semibold text-[#ececec]">*Untitled Project - QGIS [Bite-sized QGIS]</div>
        <div className="flex w-[90px] items-center">
          <div className="mt-[5px] h-[2px] w-2 bg-white" />
          <div className="ml-[27px] h-1.5 w-1.5 border-2 border-white" />
          <div className="ml-[22px] flex h-[18px] w-[18px] items-center justify-center rounded-full bg-[#f58a2c]">
            <svg width="8" height="8" viewBox="0 0 8 8"><path d="M1 1l6 6M7 1L1 7" stroke="#fff" strokeWidth="2" /></svg>
          </div>
        </div>
      </div>

      <div className="flex h-[22px] shrink-0 items-center border-b border-[#d0d0d0] pl-[2.500px]">
        {menus.map(([m, u]) => (
          <span key={m} className="px-[7px]">{m.slice(0, u)}<span className="underline underline-offset-[3px]">{m[u]}</span>{m.slice(u + 1)}</span>
        ))}
      </div>

      <div className={`h-[39px] shrink-0 ${tbCls}`}><Bar items={row1} /></div>
      <div className={`h-[39px] shrink-0 ${tbCls}`}><Bar items={row2} /></div>
      <div className={`h-[38px] shrink-0 ${tbCls}`}>
        <Grip first /><Grip />
        <Chip t="AD" c="bg-[#ffb9c5] text-[#f41f1f]" />
        <Chip t="MO" c="bg-[#dde7dd] text-[#c3d3c5]" />
        <Chip t="RO" c="bg-[#b6adbc] text-[#d8cdd0]" />
        <Spin text="0.0" dim cls="h-[23px] w-[71px] text-[#aaa]" />
        <Chip t="SC" c="bg-[#d3d5c0] text-[#b3b79a]" />
        <Chip t="ADJ" c="bg-[#c7bcc0] text-[#e6dfe0]" />
        <Chip t="2P" c="bg-[#d0d9d9] text-[#dfc5cd]" />
        <Chip t="T-" c="bg-[#fafafa] text-[#999]" />
        <Chip t="T+" c="bg-[#a3a3a6] text-[#4a4a4a]" />
        <Chip t="!!" c="bg-[#d6dccb] text-[#dcb9ad]" />
        <div className="flex w-[33px] shrink-0 justify-center">
          <svg width="24" height="24"><path d="M0 0h24v24H0z" fill="#b1b3bf" /><path d="M1 10L9 3v4q12 0 14 14Q18 12 9 13v4z" fill="#d9dce2" /></svg>
        </div>
        <Bar items={row3} />
        <div className="flex-1" />
        <Grip />
        <Bar items={["osm", "mapart"]} />
        <div className="w-[70px]" />
      </div>

      <div className="flex min-h-0 flex-1">
        {/* data source toolbar */}
        <div className="flex w-[39px] shrink-0 flex-col items-center border-r border-[#b9b9b9] bg-gradient-to-r from-[#fafafa] to-[#ececec] pt-1.5">
          <svg width="17" height="4"><path d="M0 .5h17M0 3.500h17" stroke="#b4b4b4" strokeDasharray="1 2" /></svg>
          <div className="mt-[7px] flex flex-col gap-2">
            {["lstack+plus", "gpkg+star", "vnew+star", "feather+star", "chip+star"].map((n) => <Icon key={n} n={n} />)}
          </div>
          <div className="mt-[7px] h-px w-5 bg-[#c8c8c8]" />
          <div className="mt-[7px]"><Icon n="vbox+star" /></div>
        </div>

        {/* layers dock */}
        <div className="flex w-[283px] shrink-0 flex-col">
          <div className="flex h-[22px] items-center justify-between pl-[5px] pr-0.5"><span>Layers</span><WinBtns /></div>
          <div className="flex h-[26px] items-center pl-[5px]">
            <div className="flex h-[23px] w-6 items-center justify-center rounded-[3px] border border-[#ababab] bg-[#dcdcdc]"><Icon n="brush" s={16} /></div>
            {["addgrp+plus", "eye", "filter", "-eps"].map((n) => (
              <div key={n} className="flex w-[25px] justify-center"><Icon n={n.replace("-", "")} s={16} dim={n[0] === "-"} /></div>
            ))}
            <Arrow dim />
            {["expand", "collapse", "removel"].map((n) => <div key={n} className="flex w-[25px] justify-center"><Icon n={n} s={17} /></div>)}
          </div>
          <div className="ml-px mt-[3px] flex-1 border border-[#b4b4b4] bg-white">
            <Row text="Digitized Zoning Parcels" cls="italic text-[#808080]" icon={<svg width="16" height="16" viewBox="0 0 16 16"><path d="M.5.5h15v15H.5z" fill="#6d9a6d" stroke="#3c4c3c" /><path d="M4.500 14V11l5-9.500 3 1.500-5.500 9.500z" fill="#e36a25" stroke="#f4e2d0" strokeWidth=".7" /></svg>} />
            <Row on chip text="highway" cls="" icon={<div className="h-px w-4 bg-[#ffa027]" />} />
            <Row on chip text="building" cls="" icon={<div className="h-4 w-4 border border-[#3a2c42] bg-[#8d5a99]" />} />
            <Row open text="Google Satellite" cls="italic text-[#808080]" icon={<Icon n="checker" s={13} />} />
            <Row on sel text="Zoning Map_modified" cls="text-[#eef6fc] underline underline-offset-2" icon={<div className="opacity-70"><svg width="13" height="13" viewBox="0 0 24 24">{glyph("checker")}</svg></div>} />
          </div>
          <div className="ml-px mt-px flex h-[27px] items-start border-t border-[#b4b4b4]">
            <div className="flex h-[26px] w-[68px] items-center justify-center rounded-b-[3px] border border-t-0 border-[#b0b0b0] bg-[#f7f7f7]">Layers</div>
            <div className="flex h-[25px] w-[77px] items-center justify-center rounded-b-[3px] border border-l-0 border-t-0 border-[#b9b9b9] bg-[#dcdcdc]">Browser</div>
          </div>
        </div>

        {/* canvas */}
        <div className="ml-1.5 mt-px w-[1108px] shrink-0 border border-[#b4b4b4] bg-white"><MapCanvas /></div>

        {/* styling dock */}
        <div className="ml-[9px] flex min-w-0 flex-1 flex-col">
          <div className="flex h-[22px] items-center justify-between pl-0.5 pr-0.5"><span>Layer Styling</span><WinBtns /></div>
          <Combo text="Zoning Map_modified" cls="mt-px w-[472px]" pr="pr-[7px]" icon={<span className="mr-1"><Icon n="checker" s={13} /></span>} />
          <div className="flex flex-1">
            <div className="mb-0.5 flex w-[38px] shrink-0 flex-col bg-[#5e5e5e]">
              <div className="flex h-[38px] items-center justify-center bg-[#efefef] pt-1.5"><Icon n="brush" s={22} /></div>
              {["transp", "hist", "sources", "history"].map((n) => <div key={n} className="flex h-8 items-center justify-center pr-2 pt-px"><Icon n={n} s={22} /></div>)}
            </div>
            <div className="flex min-w-0 flex-1 flex-col pl-3 pt-[15px]">
              <Combo text="Multiband color" cls="w-[413px]" icon={
                <svg width="12" height="12" className="mr-[5px]">
                  <defs><linearGradient id="r"><stop stopColor="#100" /><stop offset="1" stopColor="#f00" /></linearGradient><linearGradient id="g"><stop stopColor="#010" /><stop offset="1" stopColor="#0c0" /></linearGradient><linearGradient id="b"><stop stopColor="#001" /><stop offset="1" stopColor="#00f" /></linearGradient></defs>
                  <path d="M0 0h12v4H0z" fill="url(#r)" /><path d="M0 4h12v4H0z" fill="url(#g)" /><path d="M0 8h12v4H0z" fill="url(#b)" />
                </svg>} />
              <Band label="Red band" value="Band 1 (Red)" mt="mt-[9px]" />
              <MinMax />
              <Band label="Green band" value="Band 2 (Green)" mt="mt-1.5" />
              <MinMax />
              <Band label="Blue band" value="Band 3 (Blue)" mt="mt-1.5" />
              <MinMax />
              <div className="mt-[9px] flex h-[25px] items-center">
                <span className="ml-[3px] w-24 leading-[15px]">Contrast enhancement</span><Combo text="No enhancement" cls="w-[311px]" />
              </div>
              <div className="mt-3 flex h-4 items-center pl-[7px] text-[13.050px] font-bold">
                <svg width="8" height="12"><path d="M0 0v12l8-6z" fill="#333" /></svg><span className="ml-[11px]">Min / Max Value Settings</span>
              </div>
              <div className="mt-[17px] h-4 pl-[3px] text-[13.050px] font-bold">Layer Rendering</div>
              <div className="mt-0.5 flex h-[267px] w-[413px] flex-col rounded-sm border border-[#d6d6d6] bg-[#ebebeb] pl-2.5 pr-[11px] pt-2.5">
                <div className="flex h-[25px] items-center justify-between"><span>Blending mode</span><Combo text="Normal" cls="w-[226px]" /></div>
                {["Brightness", "Saturation", "Contrast"].map((l) => (
                  <div key={l} className="mt-1.5 flex h-[25px] items-center"><span className="w-[165px]">{l}</span><Slider /><Spin text="0" cls="ml-[8px] h-[23px] w-[58px]" /></div>
                ))}
                <div className="mt-1.5 flex h-[25px] items-center justify-between"><span>Grayscale</span><Combo text="Off" cls="w-[226px]" /></div>
                <div className="mt-1.5 flex justify-between">
                  <span className="pt-[23px]">Hue</span>
                  <div className="flex w-[226px] flex-col">
                    <div className="flex h-7 items-center">
                      <Check /><span className="ml-[5px] flex-1">Colorize</span>
                      <div className="h-7 w-[87px] rounded-[3px] border border-[#c6c6c6] bg-[#f3f3f3] p-1"><div className="mt-px h-4 rounded-sm bg-[#e7e1e1]" /></div>
                      <div className="ml-px flex h-7 w-3 items-center justify-center rounded-[3px] border border-[#c6c6c6] bg-[#f3f3f3]"><Down dim /></div>
                    </div>
                    <div className="mt-[7px] flex h-[23px] items-center">
                      <span className="w-16">Strength</span>
                      <div className="h-[5px] w-[77px] rounded-l-sm border border-r-0 border-[#777] bg-[#a0a0a0]" />
                      <div className="h-[13px] w-[13px] rounded-[3px] border border-[#a3a3a3] bg-[#fcfcfc]" />
                      <Spin text="100%" dim cls="ml-[7px] h-[23px] w-[65px]" />
                    </div>
                    <div className="ml-[76px] mt-[7px] flex h-6 w-[73px] items-center rounded-[3px] border border-[#acacac] bg-gradient-to-b from-white to-[#f0f0f0] pl-1">
                      <svg width="13" height="13" viewBox="0 0 24 24"><path d="M10 1v6h4q9 0 9 8 0 7-8 9 3-4 2-7-1-3-5-3h-2v6L0 11z" fill="#e67e3a" /></svg>
                      <span className="ml-[3px]">Reset</span>
                    </div>
                  </div>
                </div>
              </div>
              <div className="mt-2 h-4 pl-[3px] text-[13.050px] font-bold">Resampling</div>
              <div className="mt-[3px] flex h-[110px] w-[413px] flex-col gap-1.5 rounded-sm border border-[#d6d6d6] bg-[#ebebeb] pl-2.5 pr-[11px] pt-2.5">
                <div className="flex h-[25px] items-center justify-between"><span>Zoomed in</span><Combo text="Nearest neighbour" cls="w-[191px]" /></div>
                <div className="flex h-[25px] items-center justify-between"><span>Zoomed out</span><Combo text="Nearest neighbour" cls="w-[191px]" /></div>
                <div className="flex h-[25px] items-center justify-between"><span>Oversampling</span><Spin text="2.00" cls="h-[23px] w-[191px]" /></div>
              </div>
              <div className="-ml-[9px] mt-auto flex h-7 items-center pb-px pr-[3px]">
                <div className="flex h-6 w-6 items-center justify-center rounded-[3px] border border-[#bbb] bg-white"><svg width="13" height="13" viewBox="0 0 24 24"><path d="M10 1v6h4q9 0 9 8 0 7-8 9 3-4 2-7-1-3-5-3h-2v6L0 11z" fill="#e67e3a" /></svg></div>
                <div className="ml-1.5 flex h-6 w-6 items-center justify-center rounded-[3px] border border-[#bbb] bg-white"><svg width="13" height="13" viewBox="0 0 24 24"><path d="M14 1v6h-4q-9 0-9 8 0 7 8 9-3-4-2-7 1-3 5-3h2v6l10-9z" fill="#7fb58a" /></svg></div>
                <div className="flex-1" />
                <Check on /><span className="ml-[5px]">Live update</span>
                <div className="ml-[13px] flex h-[25px] w-20 items-center justify-center rounded-[3px] border border-[#acacac] bg-gradient-to-b from-white to-[#ececec]">
                  <svg width="16" height="16" viewBox="0 0 16 16"><path d="M1 9l3-1 2 4Q9 4 15 0 10 7 7 16H5z" fill="#5f8a52" stroke="#41683a" strokeWidth=".6" /></svg>Apply
                </div>
              </div>
            </div>
          </div>
        </div>
      </div>

      {/* status bar */}
      <div className="flex h-8 shrink-0 items-center pl-1 pt-0.5 text-[11.050px]">
        <div className="flex h-[25px] w-[270px] items-center rounded-[3px] border border-[#b4b4b4] bg-white pl-2 text-[13.330px] italic text-[#b9b9b9]">
          <svg width="13" height="13" viewBox="0 0 13 13"><circle cx="5" cy="5" r="4" fill="none" stroke="#888" strokeWidth="1.300" /><path d="M8 8l4.500 4.500" stroke="#888" strokeWidth="1.800" /></svg>
          <span className="ml-2">Type to locate (Ctrl+K)</span>
        </div>
        <div className="flex-1" />
        <span className="w-16">Coordinate</span>
        <div className="mb-0.5 flex h-[23px] w-[132px] items-center justify-center rounded-[3px] border border-[#b4b4b4] bg-white">120.53185,15.34873</div>
        <svg width="16" height="16" viewBox="0 0 16 16" className="ml-1"><path d="M1 3l6 8M4 1l6 9M7 3l3 5M11 5l4-4M2 7l5 3" stroke="#444" strokeWidth="1.600" /><circle cx="10" cy="11" r="4" fill="#ddd" stroke="#444" /><path d="M8 9l4 4M13 8l2 1" stroke="#a44" /></svg>
        <span className="ml-[13px] w-[33px]">Scale</span>
        <div className="flex h-[25px] w-[97px] items-stretch rounded-[3px] border border-[#b4b4b4] bg-white"><span className="flex flex-1 items-center pl-[3px]">1:23695</span><span className="flex w-5 items-center justify-center border-l border-[#b8b8b8] bg-[#f6f6f6]"><Down /></span></div>
        <svg width="12" height="15" viewBox="0 0 12 15" className="ml-3"><path d="M2.500 7V4a3.500 3.500 0 0 1 7 0v3" fill="none" stroke="#888" strokeWidth="1.500" /><path d="M0 7h12v8H0z" fill="#666" /></svg>
        <span className="ml-[9px] w-[55px]">Magnifier</span>
        <Spin text="100%" cls="h-[25px] w-[98px]" />
        <span className="ml-[9px] w-14">Rotation</span>
        <Spin text="0.0 °" cls="h-[23px] w-[94px]" />
        <span className="ml-1.5"><Check on /></span>
        <span className="ml-[5px] w-14">Render</span>
        <svg width="15" height="15" viewBox="0 0 15 15"><circle cx="7.500" cy="7" r="6" fill="#9a9a9a" stroke="#777" /><path d="M1 7h13M7.500 1v12M2 4h11M2 10h11M4.500 2q-2 5 0 10M10.500 2q2 5 0 10" fill="none" stroke="#ddd" strokeWidth=".7" /></svg>
        <span className="ml-0.5 w-[84px]">EPSG:4326</span>
        <svg width="16" height="15" viewBox="0 0 16 15" className="mr-[7px]"><path d="M5 0h6q5 1 5 5.500T11 11h1l2 4-6-4H5Q0 10 0 5.500T5 0z" fill="#555" /><path d="M3.500 5.500h2M7 5.500h2M10.500 5.500h2" stroke="#eee" strokeWidth="2" /></svg>
      </div>
    </div>
  );
}
